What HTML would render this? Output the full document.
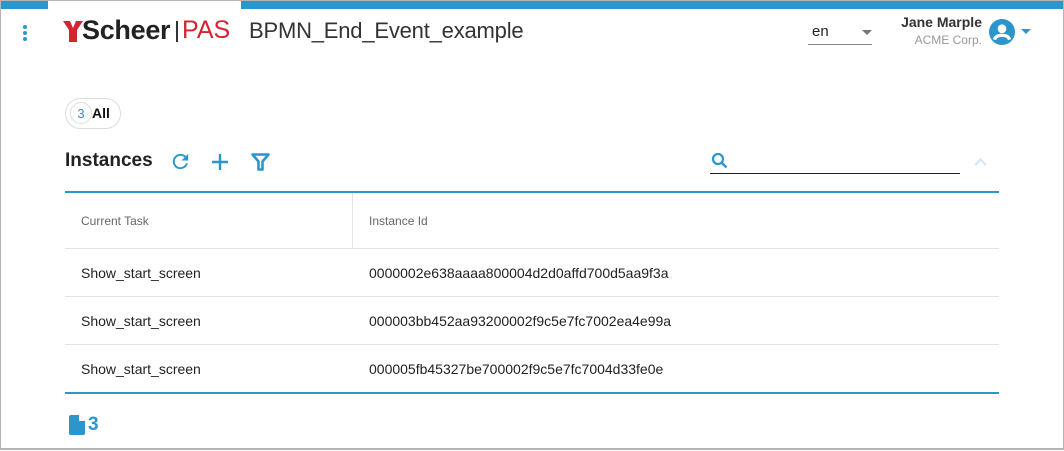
<!DOCTYPE html>
<html><head><meta charset="utf-8"><style>
*{box-sizing:border-box;margin:0;padding:0}
body{width:1064px;height:451px;overflow:hidden;background:#fff;font-family:"Liberation Sans",Roboto,sans-serif;position:relative;color:#222}
.frame{position:absolute;left:0;top:0;width:1064px;height:450px;border:1px solid #b5b5b5;border-bottom:2px solid #b5b5b5}
.bar1{position:absolute;left:1px;top:1px;width:47px;height:8px;background:#2b96cc}
.bar2{position:absolute;left:241px;top:1px;right:1px;height:8px;background:#2b96cc}
.abs{position:absolute}
.row{position:absolute;left:65px;width:934px;border-bottom:1px solid #e3e3e3;font-size:14px;color:#222}
.row span{position:absolute;top:50%;transform:translateY(-50%)}
</style></head><body>
<div class="frame"></div><div class="bar1"></div><div class="bar2"></div>
<svg class="abs" style="left:22px;top:24px" width="6" height="18"><circle cx="3" cy="3" r="2" fill="#2b96cc"/><circle cx="3" cy="9" r="2" fill="#2b96cc"/><circle cx="3" cy="15" r="2" fill="#2b96cc"/></svg>
<svg class="abs" style="left:63px;top:21px" width="20" height="21"><path d="M0 0h7l3 7 3-7h7l-6 9v12h-8v-12z" fill="#d1262f"/></svg>
<div class="abs" style="left:82px;top:15px;font-size:27px;font-weight:bold;color:#222;letter-spacing:-0.3px">Scheer</div>
<div class="abs" style="left:176px;top:21px;width:2px;height:21px;background:#333"></div>
<div class="abs" style="left:182px;top:16px;font-size:25px;color:#d1262f">PAS</div>
<div class="abs" style="left:249px;top:18px;font-size:22px;color:#333;letter-spacing:-0.2px">BPMN_End_Event_example</div>
<div class="abs" style="left:812px;top:23px;font-size:15px">en</div>
<svg class="abs" style="left:862px;top:30px" width="10" height="5"><path d="M0 0h10L5 5z" fill="#777"/></svg>
<div class="abs" style="left:808px;top:44px;width:64px;height:1px;background:#888"></div>
<div class="abs" style="left:880px;top:14px;width:102px;text-align:right;font-size:14px;font-weight:bold;color:#333">Jane Marple</div>
<div class="abs" style="left:880px;top:33px;width:102px;text-align:right;font-size:12px;color:#999">ACME Corp.</div>
<svg class="abs" style="left:989px;top:19px" width="26" height="26" viewBox="0 0 24 24"><circle cx="12" cy="12" r="12" fill="#2b96cc"/><circle cx="12" cy="9" r="4" fill="#fff"/><path d="M5 19c1-3 4-4 7-4s6 1 7 4" stroke="#fff" stroke-width="3" fill="none"/></svg>
<svg class="abs" style="left:1021px;top:29px" width="10" height="5"><path d="M0 0h10L5 5z" fill="#2b96cc"/></svg>
<div class="abs" style="left:65px;top:98px;width:56px;height:31px;border:1px solid #ddd;border-radius:16px"></div>
<div class="abs" style="left:70px;top:102px;width:22px;height:22px;border:1px solid #ddd;border-radius:50%;font-size:13px;color:#2b96cc;text-align:center;line-height:21px">3</div>
<div class="abs" style="left:92px;top:105px;font-size:14px;font-weight:bold;color:#111">All</div>
<div class="abs" style="left:65px;top:150px;font-size:19px;font-weight:bold;color:#222">Instances</div>
<svg class="abs" style="left:169px;top:150px" width="23" height="23" viewBox="0 0 24 24"><path d="M17.65 6.35A7.96 7.96 0 0 0 12 4a8 8 0 1 0 7.73 10h-2.08A6 6 0 1 1 12 6c1.66 0 3.14.69 4.22 1.78L13 11h7V4z" fill="#2b96cc"/></svg>
<svg class="abs" style="left:211px;top:153px" width="18" height="18"><path d="M9 1v16M1 9h16" stroke="#2b96cc" stroke-width="2.4"/></svg>
<svg class="abs" style="left:251px;top:153px" width="19" height="18"><path d="M1.5 1.5h16l-6 7v8h-4v-8z" fill="none" stroke="#2b96cc" stroke-width="2.6" stroke-linejoin="round"/></svg>
<svg class="abs" style="left:711px;top:152px" width="18" height="18" viewBox="0 0 18 18"><circle cx="7" cy="7" r="5" fill="none" stroke="#2b96cc" stroke-width="2.2"/><path d="M10.5 10.5l5 5" stroke="#2b96cc" stroke-width="2.4"/></svg>
<div class="abs" style="left:710px;top:173px;width:250px;height:1px;background:#222"></div>
<svg class="abs" style="left:974px;top:158px" width="13" height="8"><path d="M1 7l5.5-5.5L12 7" stroke="#cfe6f3" stroke-width="2" fill="none"/></svg>
<div class="abs" style="left:65px;top:191px;width:934px;height:2px;background:#2b96cc"></div>
<div class="row" style="top:193px;height:56px;font-size:12px;color:#666"><span style="left:16px">Current Task</span><span style="left:304px">Instance Id</span></div>
<div class="abs" style="left:352px;top:193px;width:1px;height:55px;background:#e3e3e3"></div>
<div class="row" style="top:249px;height:48px"><span style="left:16px">Show_start_screen</span><span style="left:304px">0000002e638aaaa800004d2d0affd700d5aa9f3a</span></div>
<div class="row" style="top:297px;height:48px"><span style="left:16px">Show_start_screen</span><span style="left:304px">000003bb452aa93200002f9c5e7fc7002ea4e99a</span></div>
<div class="row" style="top:345px;height:47px;border-bottom:none"><span style="left:16px">Show_start_screen</span><span style="left:304px">000005fb45327be700002f9c5e7fc7004d33fe0e</span></div>
<div class="abs" style="left:65px;top:392px;width:934px;height:2px;background:#2b96cc"></div>
<svg class="abs" style="left:69px;top:415px" width="16" height="20"><path d="M2 0h8l6 6v12a2 2 0 0 1-2 2H2a2 2 0 0 1-2-2V2a2 2 0 0 1 2-2z" fill="#2b96cc"/><path d="M10 0L16 6H10z" fill="#fff"/></svg>
<div class="abs" style="left:88px;top:414px;font-size:19px;font-weight:bold;color:#2b96cc">3</div>
</body></html>
